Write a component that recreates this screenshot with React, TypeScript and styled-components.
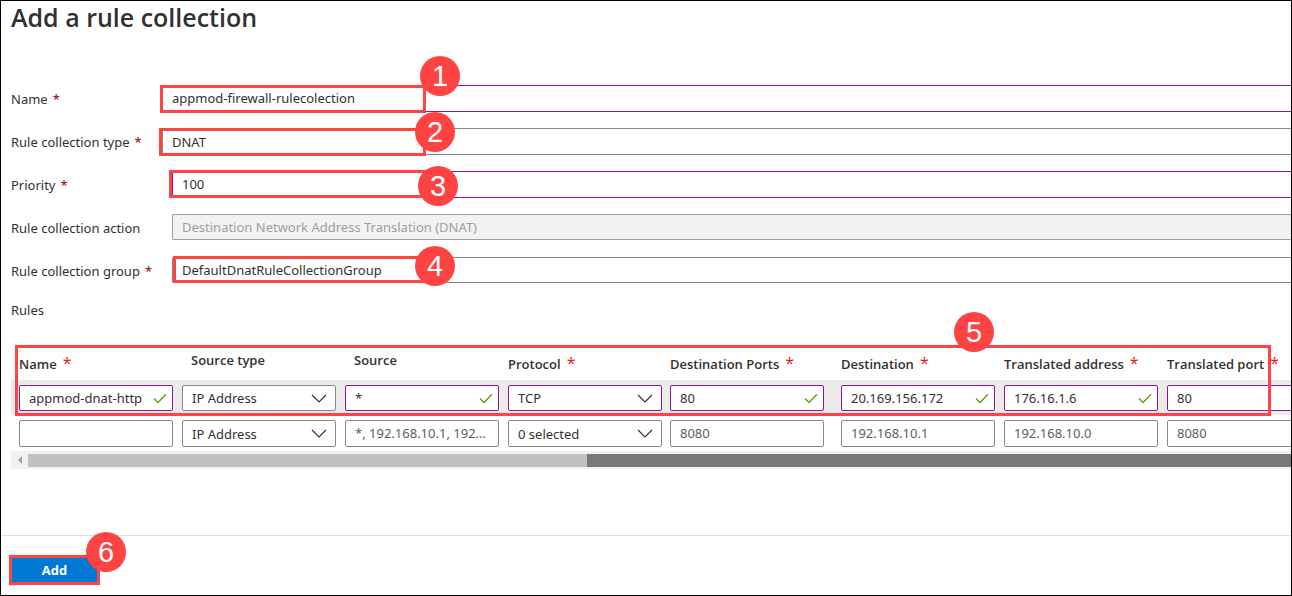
import React from 'react';
import styled, { createGlobalStyle, css } from 'styled-components';

const ink = '#323130';
const purple = '#881798';
const grey = '#8a8886';
const callout = '#ff4343';
const headingFont = '"Open Sans", "Noto Sans", sans-serif';

const GlobalStyle = createGlobalStyle`
  *, *::before, *::after { box-sizing: border-box; }
  body {
    margin: 0;
    background: #fff;
    color: ${ink};
    font: 13px/18px "Noto Sans", "Open Sans", sans-serif;
  }
`;

const Page = styled.main`
  display: flex;
  flex-direction: column;
  min-height: 100vh;
  border: 1px solid #000;
  overflow: hidden;
`;

const Title = styled.h1`
  margin: 0 10px 52px;
  font-family: ${headingFont};
  font-size: 25px;
  line-height: 32px;
  font-weight: 600;
`;

const Form = styled.form`
  flex: 1;
  display: flex;
  flex-direction: column;
`;

const Field = styled.div`
  position: relative;
  display: flex;
  align-items: flex-start;
  min-height: 43px;
  padding-left: 10px;
`;

const FieldLabel = styled.label<{ $wide?: boolean }>`
  flex: 0 0 ${(p) => (p.$wide ? 161 : 151)}px;
  line-height: 28px;
  white-space: nowrap;
`;

const FieldStar = styled.span`
  margin-left: 5px;
  color: #a4262c;
  font-weight: 600;
`;

const control = css<{ $valid?: boolean }>`
  appearance: none;
  margin: 0;
  padding: 0 9px;
  border: 1px solid ${(p) => (p.$valid ? purple : grey)};
  border-radius: 2px;
  background: #fff;
  color: ${ink};
  font: inherit;
  outline: none;
`;

const wideControl = css`
  flex: 1;
  min-width: 0;
  height: 27px;
  border-right: 0;
  border-radius: 2px 0 0 2px;
`;

const FieldInput = styled.input<{ $valid?: boolean }>`
  ${control}
  ${wideControl}
  padding-bottom: 2px;
  &:disabled {
    height: 26px;
    padding-bottom: 0;
    border-color: #a19f9d;
    background: #f3f2f1;
    color: #a19f9d;
  }
`;

const FieldSelect = styled.select<{ $short?: boolean; $valid?: boolean }>`
  ${control}
  ${wideControl}
  height: ${(p) => (p.$short ? 26 : 27)}px;
`;

const Outline = styled.span<{ $left: number; $top: number; $width: number; $height: number }>`
  position: absolute;
  left: ${(p) => p.$left}px;
  top: ${(p) => p.$top}px;
  width: ${(p) => p.$width}px;
  height: ${(p) => p.$height}px;
  border: 3px solid ${callout};
  pointer-events: none;
`;

const Badge = styled.span<{ $left: number; $top: number }>`
  position: absolute;
  z-index: 2;
  left: ${(p) => p.$left}px;
  top: ${(p) => p.$top}px;
  width: 40px;
  height: 40px;
  border-radius: 50%;
  background: ${callout};
  color: #fff;
  font: 29px/41px "Liberation Sans", Arial, sans-serif;
  text-align: center;
  pointer-events: none;
`;

const SectionLabel = styled.h2`
  margin: 0 10px 26px;
  font-size: 13px;
  line-height: 20px;
  font-weight: 400;
`;

const RulesPanel = styled.section`
  position: relative;
  margin-bottom: 66px;
  padding-left: 10px;
`;

const Table = styled.table`
  width: 1314px;
  table-layout: fixed;
  border-collapse: collapse;
`;

const HeadCell = styled.th<{ $required?: boolean }>`
  height: 34px;
  padding: ${(p) => (p.$required ? '9px 0 0 8px' : '5px 0 0 17px')};
  font-family: ${headingFont};
  font-weight: 600;
  text-align: left;
  vertical-align: top;
  white-space: nowrap;
`;

const HeadStar = styled.span`
  margin-left: 6px;
  color: #e81123;
  font-size: 16px;
  line-height: 16px;
  font-weight: 400;
`;

const Row = styled.tr<{ $active?: boolean }>`
  height: ${(p) => (p.$active ? 35 : 36)}px;
  background: ${(p) => (p.$active ? '#edebe9' : '#fff')};
`;

const Cell = styled.td`
  padding: 5px 0 0 8px;
  vertical-align: top;
`;

const CellBox = styled.div<{ $active?: boolean }>`
  position: relative;
  display: flex;
  width: 154px;
  height: ${(p) => (p.$active ? 26 : 27)}px;
`;

const CellInput = styled.input<{ $valid?: boolean }>`
  ${control}
  width: 100%;
  padding-bottom: ${(p) => (p.$valid ? 0 : 2)}px;
  text-overflow: ellipsis;
  &::placeholder { color: #605e5c; opacity: 1; }
`;

const CellSelect = styled.select<{ $valid?: boolean }>`
  ${control}
  width: 100%;
`;

const CheckMark = styled.svg`
  position: absolute;
  right: 6px;
  top: 7px;
  width: 14px;
  height: 12px;
  fill: none;
  stroke: #57a300;
  stroke-width: 1.3;
  pointer-events: none;
`;

const Chevron = styled.svg`
  position: absolute;
  right: 9px;
  top: 9px;
  width: 16px;
  height: 9px;
  fill: none;
  stroke: ${ink};
  stroke-width: 1.2;
  pointer-events: none;
`;

const Scrollbar = styled.div`
  display: flex;
  align-items: center;
  height: 18px;
  background: #f1f1f1;
`;

const ScrollArrow = styled.button`
  display: flex;
  align-items: center;
  justify-content: center;
  flex: 0 0 17px;
  height: 18px;
  padding: 0;
  border: 0;
  background: none;
`;

const ScrollThumb = styled.div<{ $share: number; $dark?: boolean }>`
  flex: ${(p) => p.$share} 1 0;
  height: 13px;
  background: ${(p) => (p.$dark ? '#787878' : '#c1c1c1')};
`;

const Footer = styled.footer`
  position: relative;
  margin-top: auto;
  padding: 21px 10px 12px;
  border-top: 1px solid #dddddd;
`;

const AddButton = styled.button`
  display: block;
  width: 87px;
  height: 26px;
  padding: 0;
  border: 0;
  background: #0078d4;
  color: #fff;
  font: 700 13px/18px ${headingFont};
`;

type Column = {
  label: string;
  width: number;
  required?: boolean;
  kind: 'text' | 'select';
  value: string;
  valid?: boolean;
  nextValue?: string;
  placeholder?: string;
};

const columns: Column[] = [
  { label: 'Name', width: 163, required: true, kind: 'text', value: 'appmod-dnat-http', valid: true },
  { label: 'Source type', width: 163, kind: 'select', value: 'IP Address', nextValue: 'IP Address' },
  { label: 'Source', width: 163, kind: 'text', value: '*', valid: true, placeholder: '*, 192.168.10.1, 192.168.10.0/24' },
  { label: 'Protocol', width: 162, required: true, kind: 'select', value: 'TCP', valid: true, nextValue: '0 selected' },
  { label: 'Destination Ports', width: 171, required: true, kind: 'text', value: '80', valid: true, placeholder: '8080' },
  { label: 'Destination', width: 163, required: true, kind: 'text', value: '20.169.156.172', valid: true, placeholder: '192.168.10.1' },
  { label: 'Translated address', width: 163, required: true, kind: 'text', value: '176.16.1.6', valid: true, placeholder: '192.168.10.0' },
  { label: 'Translated port', width: 166, required: true, kind: 'text', value: '80', valid: true, placeholder: '8080' },
];

function RuleCell({ column, active }: { column: Column; active?: boolean }) {
  const valid = active && column.valid;
  return (
    <Cell>
      <CellBox $active={active}>
        {column.kind === 'select' ? (
          <>
            <CellSelect $valid={valid} aria-label={column.label}>
              <option>{active ? column.value : column.nextValue}</option>
            </CellSelect>
            <Chevron viewBox="0 0 16 9" aria-hidden="true">
              <path d="M1 1l7 7 7-7" />
            </Chevron>
          </>
        ) : (
          <>
            <CellInput
              $valid={valid}
              aria-label={column.label}
              defaultValue={active ? column.value : ''}
              placeholder={active ? undefined : column.placeholder}
            />
            {valid && (
              <CheckMark viewBox="0 0 14 12" aria-hidden="true">
                <path d="M1 6.5l4 4L13 2.3" />
              </CheckMark>
            )}
          </>
        )}
      </CellBox>
    </Cell>
  );
}

export default function App() {
  return (
    <>
      <GlobalStyle />
      <Page>
        <Title>Add a rule collection</Title>
        <Form onSubmit={(e) => e.preventDefault()}>
          <Field>
            <FieldLabel htmlFor="name">Name<FieldStar>*</FieldStar></FieldLabel>
            <FieldInput id="name" $valid defaultValue="appmod-firewall-rulecolection" />
            <Outline $left={159} $top={0} $width={266} $height={28} />
            <Badge $left={419} $top={-29}>1</Badge>
          </Field>
          <Field>
            <FieldLabel htmlFor="type">Rule collection type<FieldStar>*</FieldStar></FieldLabel>
            <FieldSelect id="type"><option>DNAT</option></FieldSelect>
            <Outline $left={158} $top={0} $width={267} $height={28} />
            <Badge $left={414} $top={-16}>2</Badge>
          </Field>
          <Field>
            <FieldLabel htmlFor="priority" $wide>Priority<FieldStar>*</FieldStar></FieldLabel>
            <FieldInput id="priority" $valid defaultValue="100" />
            <Outline $left={168} $top={-1} $width={257} $height={28} />
            <Badge $left={417} $top={-5}>3</Badge>
          </Field>
          <Field>
            <FieldLabel htmlFor="action" $wide>Rule collection action</FieldLabel>
            <FieldInput id="action" disabled defaultValue="Destination Network Address Translation (DNAT)" />
          </Field>
          <Field>
            <FieldLabel htmlFor="group" $wide>Rule collection group<FieldStar>*</FieldStar></FieldLabel>
            <FieldSelect id="group" $short><option>DefaultDnatRuleCollectionGroup</option></FieldSelect>
            <Outline $left={172} $top={-1} $width={253} $height={27} />
            <Badge $left={414} $top={-11}>4</Badge>
          </Field>
          <SectionLabel>Rules</SectionLabel>
          <RulesPanel>
            <Table>
              <colgroup>
                {columns.map((c) => <col key={c.label} width={c.width} />)}
              </colgroup>
              <thead>
                <tr>
                  {columns.map((c) => (
                    <HeadCell key={c.label} $required={c.required} scope="col">
                      {c.label}
                      {c.required && <HeadStar>*</HeadStar>}
                    </HeadCell>
                  ))}
                </tr>
              </thead>
              <tbody>
                <Row $active>
                  {columns.map((c) => <RuleCell key={c.label} column={c} active />)}
                </Row>
                <Row>
                  {columns.map((c) => <RuleCell key={c.label} column={c} />)}
                </Row>
              </tbody>
            </Table>
            <Scrollbar>
              <ScrollArrow type="button" aria-label="Scroll left">
                <svg width="4" height="8" viewBox="0 0 4 8"><path d="M4 0v8L0 4z" fill="#a3a3a3" /></svg>
              </ScrollArrow>
              <ScrollThumb $share={559} />
              <ScrollThumb $share={704} $dark />
            </Scrollbar>
            <Outline $left={14} $top={-1} $width={1256} $height={71} />
            <Badge $left={953} $top={-34}>5</Badge>
          </RulesPanel>
          <Footer>
            <AddButton type="submit">Add</AddButton>
            <Outline $left={8} $top={19} $width={91} $height={30} />
            <Badge $left={85} $top={-4}>6</Badge>
          </Footer>
        </Form>
      </Page>
    </>
  );
}
